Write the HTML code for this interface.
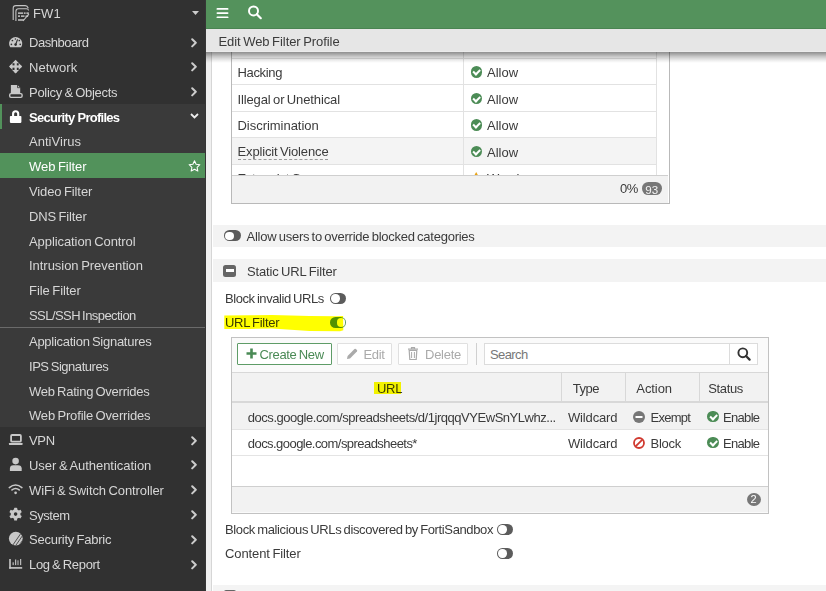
<!DOCTYPE html>
<html><head><meta charset="utf-8">
<style>
*{margin:0;padding:0;box-sizing:border-box}
html,body{width:826px;height:591px;overflow:hidden;background:#fff;font-family:"Liberation Sans",sans-serif;font-size:13px;color:#3b3b3b}
.a{position:absolute}
.t{position:absolute;white-space:nowrap;line-height:15px;letter-spacing:-0.3px;word-spacing:-1px}
#side{position:absolute;left:0;top:0;width:206px;height:591px;background:#313131}
.mi{position:absolute;left:0;width:206px;height:24.8px}
.mi .t{left:29px;top:5.8px;color:#d6d6d6}
.mi svg.ic{position:absolute;left:9px}
.chev{position:absolute;left:191px;top:8px}
.tog{width:16.5px;height:11px;border-radius:5.5px;background:#5c5c5c}
.tog:after{content:"";position:absolute;left:1.3px;top:1.3px;width:8.4px;height:8.4px;border-radius:50%;background:#fff}
.tog.on{background:#52925b}
.tog.on:after{left:auto;right:1.2px;top:1.1px}
.btn{position:absolute;height:22px;border:1px solid #e0e0e0;background:#fff;border-radius:1px}
.ok{position:absolute;width:11.5px;height:11.5px;border-radius:50%;background:#4c8c56}
.ok:after{content:"";position:absolute;left:2.6px;top:3.2px;width:5px;height:2.6px;border-left:2px solid #fff;border-bottom:2px solid #fff;transform:rotate(-45deg)}
</style></head><body>
<div id="side">

  <div class="t" style="letter-spacing:0.150px;left:33px;top:6px;color:#d6d6d6">FW1</div>
  <svg class="a" style="left:192px;top:11px" width="7" height="4" viewBox="0 0 7 4"><path d="M0 0h7L3.5 4z" fill="#ccc"/></svg>

  <div class="mi" style="top:29.4px">
    <div class="t" style="letter-spacing:-0.463px">Dashboard</div>
    <svg class="chev" style="top:8.3px" width="7" height="10" viewBox="0 0 7 10"><path d="M1.2 1.2l3.6 3.6L1.2 8.4" stroke="#ccc" stroke-width="2" fill="none" stroke-linecap="round" stroke-linejoin="round"/></svg>
  </div>
  <div class="mi" style="top:54.2px">
    <div class="t" style="letter-spacing:0.083px">Network</div>
    <svg class="chev" style="top:8.3px" width="7" height="10" viewBox="0 0 7 10"><path d="M1.2 1.2l3.6 3.6L1.2 8.4" stroke="#ccc" stroke-width="2" fill="none" stroke-linecap="round" stroke-linejoin="round"/></svg>
  </div>
  <div class="mi" style="top:79.0px">
    <div class="t" style="letter-spacing:-0.269px">Policy &amp; Objects</div>
    <svg class="chev" style="top:8.3px" width="7" height="10" viewBox="0 0 7 10"><path d="M1.2 1.2l3.6 3.6L1.2 8.4" stroke="#ccc" stroke-width="2" fill="none" stroke-linecap="round" stroke-linejoin="round"/></svg>
  </div>
  <!-- submenu block -->
  <div class="a" style="left:0;top:103.8px;width:206px;height:323.4px;background:#3a3a3a"></div>
  <div class="a" style="left:0;top:103.8px;width:2px;height:24.8px;background:#52925b"></div>
  <div class="mi" style="top:103.8px">
    <div class="t" style="font-weight:bold;color:#fff;word-spacing:0;letter-spacing:-0.72px">Security Profiles</div>
    <svg class="a" style="left:190px;top:9.4px" width="9" height="6" viewBox="0 0 9 6"><path d="M1 1l3.5 3.5L8 1" stroke="#eee" stroke-width="1.8" fill="none"/></svg>
  </div>
  <div class="mi" style="top:128.6px"><div class="t" style="letter-spacing:0.025px">AntiVirus</div></div>
  <div class="mi" style="top:153.4px;background:#52925b"><div class="t" style="letter-spacing:-0.050px;color:#fff">Web Filter</div>
    <svg class="a" style="left:187.5px;top:6.8px" width="13" height="12" viewBox="0 0 24 23"><path d="M12 1.5l3.1 6.6 7.2.9-5.3 5 1.4 7.1L12 17.6l-6.4 3.5 1.4-7.1-5.3-5 7.2-.9z" fill="none" stroke="#fff" stroke-width="2" stroke-linejoin="round"/></svg>
  </div>
  <div class="mi" style="top:178.2px"><div class="t" style="letter-spacing:-0.108px">Video Filter</div></div>
  <div class="mi" style="top:203.0px"><div class="t" style="letter-spacing:-0.138px">DNS Filter</div></div>
  <div class="mi" style="top:227.8px"><div class="t" style="letter-spacing:-0.083px">Application Control</div></div>
  <div class="mi" style="top:252.6px"><div class="t" style="letter-spacing:-0.033px">Intrusion Prevention</div></div>
  <div class="mi" style="top:277.4px"><div class="t" style="letter-spacing:-0.060px">File Filter</div></div>
  <div class="mi" style="top:302.2px"><div class="t" style="letter-spacing:-0.556px">SSL/SSH Inspection</div></div>
  <div class="a" style="left:0;top:327px;width:206px;height:1.2px;background:#6a6a6a"></div>
  <div class="mi" style="top:328.2px"><div class="t" style="letter-spacing:-0.270px">Application Signatures</div></div>
  <div class="mi" style="top:353.0px"><div class="t" style="letter-spacing:-0.464px">IPS Signatures</div></div>
  <div class="mi" style="top:377.8px"><div class="t" style="letter-spacing:-0.255px">Web Rating Overrides</div></div>
  <div class="mi" style="top:402.6px"><div class="t" style="letter-spacing:-0.165px">Web Profile Overrides</div></div>

  <div class="mi" style="top:427.4px">
    <div class="t" style="letter-spacing:-0.300px">VPN</div>
    <svg class="chev" style="top:8.3px" width="7" height="10" viewBox="0 0 7 10"><path d="M1.2 1.2l3.6 3.6L1.2 8.4" stroke="#ccc" stroke-width="2" fill="none" stroke-linecap="round" stroke-linejoin="round"/></svg>
  </div>
  <div class="mi" style="top:452.2px">
    <div class="t" style="letter-spacing:-0.035px">User &amp; Authentication</div>
    <svg class="chev" style="top:8.3px" width="7" height="10" viewBox="0 0 7 10"><path d="M1.2 1.2l3.6 3.6L1.2 8.4" stroke="#ccc" stroke-width="2" fill="none" stroke-linecap="round" stroke-linejoin="round"/></svg>
  </div>
  <div class="mi" style="top:477.0px">
    <div class="t" style="letter-spacing:-0.095px">WiFi &amp; Switch Controller</div>
    <svg class="chev" style="top:8.3px" width="7" height="10" viewBox="0 0 7 10"><path d="M1.2 1.2l3.6 3.6L1.2 8.4" stroke="#ccc" stroke-width="2" fill="none" stroke-linecap="round" stroke-linejoin="round"/></svg>
  </div>
  <div class="mi" style="top:501.8px">
    <div class="t" style="letter-spacing:-0.467px">System</div>
    <svg class="chev" style="top:8.3px" width="7" height="10" viewBox="0 0 7 10"><path d="M1.2 1.2l3.6 3.6L1.2 8.4" stroke="#ccc" stroke-width="2" fill="none" stroke-linecap="round" stroke-linejoin="round"/></svg>
  </div>
  <div class="mi" style="top:526.6px">
    <div class="t" style="letter-spacing:-0.229px">Security Fabric</div>
    <svg class="chev" style="top:8.3px" width="7" height="10" viewBox="0 0 7 10"><path d="M1.2 1.2l3.6 3.6L1.2 8.4" stroke="#ccc" stroke-width="2" fill="none" stroke-linecap="round" stroke-linejoin="round"/></svg>
  </div>
  <div class="mi" style="top:551.4px">
    <div class="t" style="letter-spacing:-0.308px">Log &amp; Report</div>
    <svg class="chev" style="top:8.3px" width="7" height="10" viewBox="0 0 7 10"><path d="M1.2 1.2l3.6 3.6L1.2 8.4" stroke="#ccc" stroke-width="2" fill="none" stroke-linecap="round" stroke-linejoin="round"/></svg>
  </div>

  <svg class="a" style="left:0;top:0" width="206" height="591" viewBox="0 0 206 591">
   <g fill="none" stroke="#c4c4c4" stroke-width="1.1">
    <path d="M13.2 20V8.3Q13.2 5.6 16 5.6H25.3Q27.3 5.6 28.3 8.3"/>
    <path d="M15.9 21V11.4Q15.9 8.7 18.6 8.7H26.5Q28.3 8.7 28.6 10.5"/>
   </g>
   <g fill="#c4c4c4">
    <rect x="18" y="12.4" width="5.2" height="1.5"/><rect x="24" y="12.4" width="1.6" height="1.5"/><rect x="26.4" y="12.4" width="2.5" height="1.5"/>
    <rect x="18" y="15.4" width="2" height="1.5"/><rect x="21" y="15.4" width="3.5" height="1.5"/><path d="M25.5 15.4h3.3l-1.1 1.5h-2.2z"/>
    <path d="M18 19.2h6.4l-1 1.5H18z"/><path d="M28.9 13.9L23 21" stroke="#c4c4c4" stroke-width="1.1"/>
   </g>
   <!-- dashboard gauge -->
   <path d="M10.2 47.3A6.6 6.6 0 1 1 21.1 47.3Z" fill="#c8c8c8"/>
   <g fill="#313131"><circle cx="12.4" cy="40.5" r="0.85"/><circle cx="11.4" cy="44.3" r="0.85"/><circle cx="15.4" cy="39" r="0.75"/><circle cx="19.3" cy="40.5" r="0.85"/><circle cx="20.2" cy="44.3" r="0.85"/><circle cx="15.6" cy="44.6" r="1.3"/></g>
   <path d="M15.6 44.6L17.6 39.4" stroke="#313131" stroke-width="1.2"/>
   <!-- network -->
   <g fill="#c8c8c8">
    <path d="M15.6 59.7L19 63.2H12.2z"/><path d="M15.6 73.6L19 70.1H12.2z"/><path d="M9 66.5L12.5 63.1V69.9z"/><path d="M22.2 66.5L18.7 63.1V69.9z"/>
    <rect x="14.5" y="61" width="2.3" height="11.5"/><rect x="10" y="65.4" width="11.2" height="2.3"/>
   </g>
   <!-- policy -->
   <path d="M10.9 85H17.5L20.2 87.7V93.3H10.9Z" fill="#c8c8c8"/>
   <path d="M17.5 85V87.7H20.2" fill="none" stroke="#313131" stroke-width="0.8"/>
   <rect x="9.7" y="93.6" width="12.4" height="3.8" rx="1.3" fill="#313131" stroke="#c8c8c8" stroke-width="1.4"/>
   <path d="M10.9 93.6V91.5H16V93.6" fill="#c8c8c8"/>
   <!-- lock -->
   <path d="M13.1 116.5V113.8A2.55 2.55 0 0 1 18.2 113.8V116.5" fill="none" stroke="#fff" stroke-width="2.1"/>
   <rect x="9.9" y="116" width="11.5" height="6.9" rx="0.8" fill="#fff"/>
   <!-- VPN laptop -->
   <rect x="11.1" y="435" width="9.8" height="6.7" rx="1" fill="none" stroke="#c8c8c8" stroke-width="1.8"/>
   <path d="M8.9 442.9H22.6V443.9Q22.6 445.1 21.4 445.1H10.1Q8.9 445.1 8.9 443.9Z" fill="#c8c8c8"/>
   <!-- user -->
   <circle cx="15.6" cy="461.1" r="3.3" fill="#c8c8c8"/>
   <path d="M9.9 470.9V468.6Q9.9 465.2 13.3 465.2H17.9Q21.7 465.2 21.7 468.6V470.9Z" fill="#c8c8c8"/>
   <!-- wifi -->
   <g fill="none" stroke="#c8c8c8" stroke-width="1.6" stroke-linecap="round">
    <path d="M9.3 487.6Q15.6 482.4 21.9 487.6"/><path d="M12 489.9Q15.6 487.2 19.2 489.9"/>
   </g>
   <circle cx="15.6" cy="492.8" r="1.35" fill="#c8c8c8"/>
   <!-- gear -->
   <g transform="translate(15.6 514.1)">
    <g fill="#c8c8c8">
     <circle r="4.9"/>
     <rect x="-1.5" y="-6.4" width="3" height="12.8" rx="0.6"/>
     <rect x="-1.5" y="-6.4" width="3" height="12.8" rx="0.6" transform="rotate(60)"/>
     <rect x="-1.5" y="-6.4" width="3" height="12.8" rx="0.6" transform="rotate(120)"/>
    </g>
    <circle r="1.8" fill="#313131"/>
   </g>
   <!-- fabric -->
   <clipPath id="fc"><circle cx="15.8" cy="538.6" r="6.9"/></clipPath>
   <circle cx="15.8" cy="538.6" r="6.9" fill="#c8c8c8"/>
   <g clip-path="url(#fc)" stroke="#313131" stroke-width="0.8">
    <path d="M11.5 547L22.5 531M14 548L25 532M16.5 549L27 534"/>
   </g>
   <!-- chart -->
   <g fill="#c8c8c8">
    <rect x="9.2" y="559" width="1.6" height="9.7"/><rect x="9.2" y="567.1" width="13" height="1.6"/>
    <rect x="12.6" y="562.3" width="1.1" height="2.8"/><rect x="15.1" y="559.5" width="1.1" height="5.6"/><rect x="17.4" y="560.3" width="1.2" height="4.8" opacity="0.8"/><rect x="20.1" y="559" width="1.1" height="6.1"/>
   </g>
  </svg>
  <div class="a" style="left:205px;top:0;width:1px;height:591px;background:#363636"></div>
</div>

<!-- MAIN -->
<div id="main">
  <!-- left strip -->
  <div class="a" style="left:206px;top:0;width:5px;height:591px;background:#f0f0f0"></div>
  <div class="a" style="left:211px;top:0;width:1px;height:591px;background:#d6d6d6"></div>

  <!-- category table -->
  <div class="a" style="left:231px;top:0;width:438.5px;height:203.7px;border:1px solid #b9b9b9;border-top:none;background:#fff"></div>
  <div class="a" style="left:232px;top:137.5px;width:424px;height:26.1px;background:#f4f4f4"></div>
  <div class="a" style="left:232px;top:58px;width:424px;height:1px;background:#e2e2e2"></div>
  <div class="a" style="left:232px;top:84.4px;width:424px;height:1px;background:#e2e2e2"></div>
  <div class="a" style="left:232px;top:110.8px;width:424px;height:1px;background:#e2e2e2"></div>
  <div class="a" style="left:232px;top:137.2px;width:424px;height:1px;background:#e2e2e2"></div>
  <div class="a" style="left:232px;top:163.6px;width:424px;height:1px;background:#e2e2e2"></div>
  <div class="a" style="left:462.5px;top:30px;width:1px;height:145px;background:#e2e2e2"></div>
  <div class="a" style="left:656px;top:30px;width:1px;height:145px;background:#e2e2e2"></div>
  <div class="t" style="letter-spacing:-0.333px;left:237.5px;top:65px">Hacking</div>
  <div class="t" style="letter-spacing:-0.128px;left:237.5px;top:91.5px">Illegal or Unethical</div>
  <div class="t" style="letter-spacing:-0.033px;left:237.5px;top:118px">Discrimination</div>
  <div class="t" style="letter-spacing:-0.144px;left:237.5px;top:144.5px;border-bottom:1px dashed #999;line-height:14px">Explicit Violence</div>
  <div class="t" style="left:237.5px;top:171px">Extremist Groups</div>
  <div class="ok" style="left:470.7px;top:66px"></div>
  <div class="ok" style="left:470.7px;top:92.5px"></div>
  <div class="ok" style="left:470.7px;top:119px"></div>
  <div class="ok" style="left:470.7px;top:145.5px"></div>
  <div class="a" style="left:470.7px;top:172px;width:11px;height:10px;background:#e8a317;clip-path:polygon(50% 0,100% 100%,0 100%)"></div>
  <div class="t" style="letter-spacing:0.000px;left:487px;top:65px">Allow</div>
  <div class="t" style="letter-spacing:0.000px;left:487px;top:91.5px">Allow</div>
  <div class="t" style="letter-spacing:0.000px;left:487px;top:118px">Allow</div>
  <div class="t" style="letter-spacing:0.000px;left:487px;top:144.5px">Allow</div>
  <div class="t" style="left:487px;top:171px">Warning</div>
  <!-- footer -->
  <div class="a" style="left:232px;top:174.6px;width:436px;height:28.4px;background:#f2f2f2;border-top:1px solid #cfcfcf"></div>
  <div class="t" style="letter-spacing:-0.500px;left:620px;top:180.5px">0%</div>
  <div class="a" style="left:641.8px;top:182px;width:20.4px;height:12.8px;border-radius:6.4px;background:#777"></div>
  <div class="t" style="left:645.3px;top:181.6px;color:#f4f4f4;font-size:11.6px;letter-spacing:0">93</div>

  <!-- header + title -->
  <div class="a" style="left:206px;top:0;width:620px;height:29.2px;background:#54925c;border-bottom:1.5px solid #4a8452"></div>
  <svg class="a" style="left:216px;top:6.7px" width="13" height="11" viewBox="0 0 13 11"><rect x="0.5" y="1" width="12" height="1.8" rx="0.9" fill="#fff"/><rect x="0.5" y="5.2" width="12" height="1.8" rx="0.9" fill="#fff"/><rect x="0.5" y="9.4" width="12" height="1.8" rx="0.9" fill="#fff"/></svg>
  <svg class="a" style="left:247px;top:4.2px" width="16" height="16" viewBox="0 0 16 16"><circle cx="6.5" cy="6.9" r="4.5" fill="none" stroke="#fff" stroke-width="2"/><path d="M9.8 10.2l4 4" stroke="#fff" stroke-width="2.2" stroke-linecap="round"/></svg>
  <div class="a" style="left:206px;top:29.2px;width:620px;height:22.8px;background:#e6e6e6;border-bottom:1px solid #ebebeb"></div>
  <div class="a" style="left:206px;top:52px;width:620px;height:11px;background:linear-gradient(rgba(0,0,0,0.44),rgba(0,0,0,0.35) 18%,rgba(0,0,0,0.22) 41%,rgba(0,0,0,0.12) 64%,rgba(0,0,0,0.05) 82%,rgba(0,0,0,0))"></div>
  <div class="t" style="letter-spacing:-0.059px;left:218.5px;top:34.2px">Edit Web Filter Profile</div>

  <!-- Allow users band -->
  <div class="a" style="left:213px;top:224.6px;width:613px;height:22.4px;background:#f3f3f3"></div>
  <div class="a tog" style="left:224px;top:230.4px"></div>
  <div class="t" style="letter-spacing:-0.248px;left:246.5px;top:229.3px">Allow users to override blocked categories</div>

  <!-- Static URL filter band -->
  <div class="a" style="left:213px;top:259.4px;width:613px;height:22.2px;background:#f3f3f3"></div>
  <div class="a" style="left:223px;top:264.5px;width:13px;height:12.3px;border-radius:2.5px;background:#666"></div>
  <div class="a" style="left:225.5px;top:269.3px;width:8px;height:2.7px;background:#fff"></div>
  <div class="t" style="letter-spacing:-0.144px;left:247px;top:263.5px">Static URL Filter</div>

  <div class="t" style="letter-spacing:-0.419px;left:225px;top:290.8px">Block invalid URLs</div>
  <div class="a tog" style="left:329.9px;top:293.1px"></div>

  
  <div class="t" style="letter-spacing:-0.275px;left:225px;top:315px">URL Filter</div>
  <div class="a tog on" style="left:329.9px;top:317.2px;height:10.4px"></div>
  <svg class="a" style="left:0;top:0;mix-blend-mode:multiply" width="826" height="340" viewBox="0 0 826 340"><path d="M224.3 315.6L250 315.2L272 315L309.5 316L336 316.2L343.1 316.1L343.3 330.3L340 331.2L309.5 331.1L272 328.5L250 328.9L224.3 329Z" fill="#ffff00"/></svg>

  <!-- URL table -->
  <div class="a" style="left:231px;top:336.5px;width:537.5px;height:177px;border:1px solid #c2c2c2;background:#fafafa"></div>
  <div class="a" style="left:232px;top:372px;width:536px;height:31.2px;background:#f2f2f2;border-top:1px solid #d8d8d8;border-bottom:2px solid #d8d8d8"></div>
  <div class="btn" style="left:237.3px;top:343px;width:94.5px;border-color:#5e9c67"></div>
  <svg class="a" style="left:245.5px;top:348px" width="11" height="11" viewBox="0 0 11 11"><path d="M5.5 0.5v10M0.5 5.5h10" stroke="#4a8a55" stroke-width="2.6"/></svg>
  <div class="t" style="letter-spacing:-0.340px;left:259.5px;top:347px;color:#4a8a55">Create New</div>
  <div class="btn" style="left:337.4px;top:343px;width:54.2px"></div>
  <svg class="a" style="left:346px;top:348px" width="12" height="12" viewBox="0 0 12 12"><path d="M1 11l.6-3L8.5 1.1a1 1 0 0 1 1.4 0l1 1a1 1 0 0 1 0 1.4L4 10.4z" fill="#aaa"/></svg>
  <div class="t" style="letter-spacing:-0.325px;left:363.5px;top:347px;color:#aaa">Edit</div>
  <div class="btn" style="left:398.2px;top:343px;width:69.8px"></div>
  <svg class="a" style="left:408px;top:346.5px" width="10" height="13" viewBox="0 0 10 13"><path d="M0 2.2h10M3.5 2V.6h3V2" stroke="#aaa" stroke-width="1.2" fill="none"/><path d="M1.2 3.5h7.6l-.6 9H1.8z" fill="none" stroke="#aaa" stroke-width="1.2"/><path d="M3.6 5v6M6.4 5v6" stroke="#aaa" stroke-width="1"/></svg>
  <div class="t" style="letter-spacing:-0.250px;left:425px;top:347px;color:#aaa">Delete</div>
  <div class="a" style="left:475.5px;top:343px;width:1px;height:22px;background:#d0d0d0"></div>
  <div class="a" style="left:484px;top:343.4px;width:273.6px;height:22px;border:1px solid #dcdcdc;background:#fff"></div>
  <div class="a" style="left:729px;top:344px;width:1px;height:21px;background:#dcdcdc"></div>
  <div class="t" style="letter-spacing:-0.617px;left:490px;top:347px;color:#777">Search</div>
  <svg class="a" style="left:737px;top:347px" width="14" height="14" viewBox="0 0 14 14"><circle cx="5.8" cy="5.8" r="4.4" fill="none" stroke="#333" stroke-width="1.9"/><path d="M9 9l3.6 3.6" stroke="#333" stroke-width="2.2" stroke-linecap="round"/></svg>
  <div class="a" style="left:561px;top:373px;width:1px;height:83px;background:#d8d8d8"></div>
  <div class="a" style="left:625px;top:373px;width:1px;height:83px;background:#d8d8d8"></div>
  <div class="a" style="left:698.5px;top:373px;width:1px;height:83px;background:#d8d8d8"></div>
  <div class="t" style="left:377px;top:380.5px">URL</div>
  <div class="a" style="left:374px;top:382px;width:27.2px;height:12.4px;background:#ffff00;mix-blend-mode:multiply"></div>
  <div class="t" style="letter-spacing:-0.500px;left:572.7px;top:380.5px">Type</div>
  <div class="t" style="letter-spacing:-0.083px;left:636.3px;top:380.5px">Action</div>
  <div class="t" style="letter-spacing:-0.350px;left:708.2px;top:380.5px">Status</div>
  <div class="a" style="left:232px;top:403px;width:536px;height:26.3px;background:#f2f2f2"></div>
  <div class="a" style="left:232px;top:429.3px;width:536px;height:57px;background:#fff"></div>
  <div class="a" style="left:232px;top:429px;width:536px;height:1px;background:#e4e4e4"></div>
  <div class="a" style="left:232px;top:455.3px;width:536px;height:1px;background:#e4e4e4"></div>
  <div class="t" style="letter-spacing:-0.466px;left:247.8px;top:410px">docs.google.com/spreadsheets/d/1jrqqqVYEwSnYLwhz...</div>
  <div class="t" style="letter-spacing:-0.550px;left:247.8px;top:436px">docs.google.com/spreadsheets*</div>
  <div class="t" style="letter-spacing:-0.150px;left:568px;top:410px">Wildcard</div>
  <div class="t" style="letter-spacing:-0.150px;left:568px;top:436px">Wildcard</div>
  <svg class="a" style="left:633px;top:410.5px" width="12" height="12" viewBox="0 0 12 12"><circle cx="6" cy="6" r="6" fill="#777"/><rect x="2.5" y="5" width="7" height="2" fill="#fff"/></svg>
  <div class="t" style="letter-spacing:-0.725px;left:650.5px;top:410px">Exempt</div>
  <svg class="a" style="left:633px;top:436.5px" width="12" height="12" viewBox="0 0 12 12"><circle cx="6" cy="6" r="5" fill="none" stroke="#d03a30" stroke-width="1.8"/><path d="M2.6 9.4L9.4 2.6" stroke="#d03a30" stroke-width="1.8"/></svg>
  <div class="t" style="letter-spacing:-0.275px;left:650.5px;top:436px">Block</div>
  <div class="ok" style="left:707px;top:410.5px"></div>
  <div class="t" style="letter-spacing:-0.675px;left:723px;top:410px">Enable</div>
  <div class="ok" style="left:707px;top:436.5px"></div>
  <div class="t" style="letter-spacing:-0.675px;left:723px;top:436px">Enable</div>
  <div class="a" style="left:232px;top:486.3px;width:536px;height:26px;background:#f2f2f2;border-top:1px solid #cfcfcf"></div>
  <div class="a" style="left:746.7px;top:492.5px;width:14px;height:13.4px;border-radius:50%;background:#777"></div>
  <div class="t" style="left:750.5px;top:492px;color:#fff;font-size:11px">2</div>

  <div class="t" style="letter-spacing:-0.370px;left:225px;top:522.3px">Block malicious URLs discovered by FortiSandbox</div>
  <div class="a tog" style="left:496.9px;top:523.9px"></div>
  <div class="t" style="letter-spacing:-0.092px;left:225px;top:546px">Content Filter</div>
  <div class="a tog" style="left:496.9px;top:548px"></div>
  <div class="a" style="left:213px;top:585px;width:613px;height:6px;background:#f4f4f4"></div>
  <div class="a" style="left:224px;top:590px;width:12px;height:4px;border-radius:2px;background:#666"></div>
</div>
</body></html>
